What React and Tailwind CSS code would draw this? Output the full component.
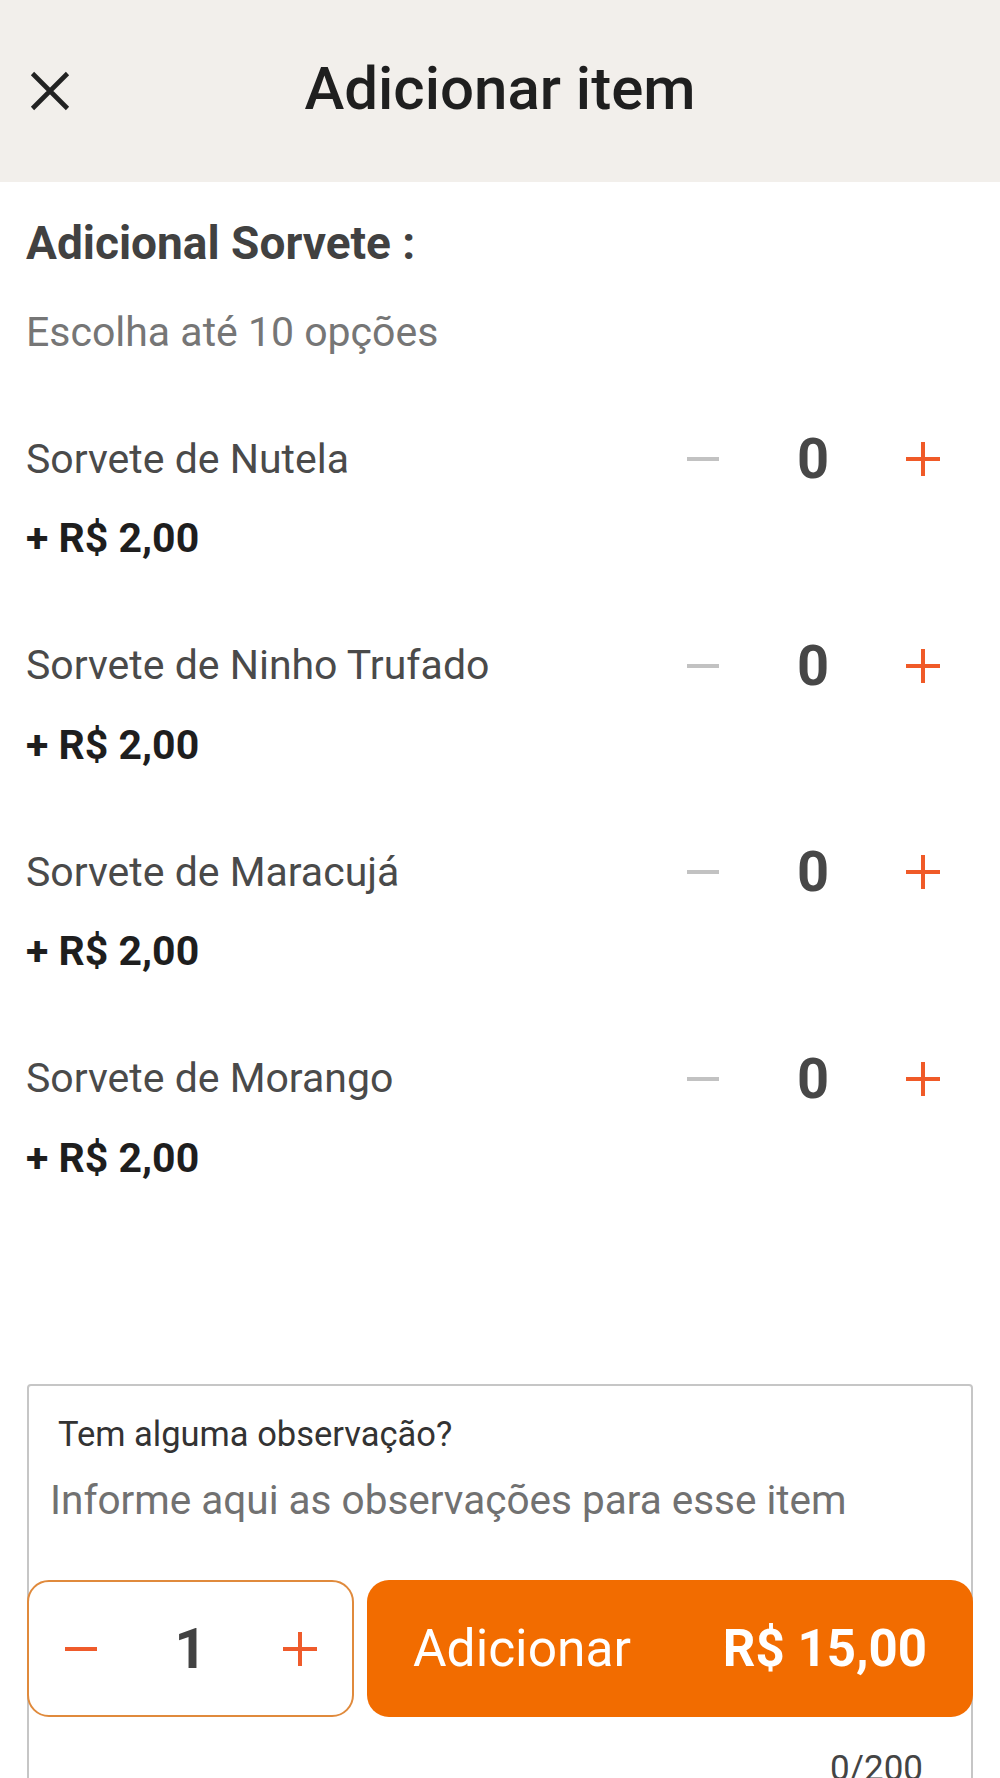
import React from 'react'

const items = [
  { name: 'Sorvete de Nutela', price: '+ R$ 2,00' },
  { name: 'Sorvete de Ninho Trufado', price: '+ R$ 2,00' },
  { name: 'Sorvete de Maracujá', price: '+ R$ 2,00' },
  { name: 'Sorvete de Morango', price: '+ R$ 2,00' },
]

const Minus = ({ color }) => (
  <svg width="34" height="34" viewBox="0 0 34 34">
    <line x1="1" y1="17" x2="33" y2="17" stroke={color} strokeWidth="4" />
  </svg>
)

const Plus = ({ color }) => (
  <svg width="34" height="34" viewBox="0 0 34 34">
    <line x1="0" y1="17" x2="34" y2="17" stroke={color} strokeWidth="4" />
    <line x1="17" y1="0" x2="17" y2="34" stroke={color} strokeWidth="4" />
  </svg>
)

const OptionRow = ({ name, price }) => (
  <div className="pb-[78.5px]">
    <div className="flex items-center h-[56px] pl-[26px] pr-[22px]">
      <span className="flex-1 text-[41px] leading-none text-[#4a4a4a]">{name}</span>
      <div className="flex items-center">
        <div className="w-[110px] flex justify-center"><Minus color="#c2c2c2" /></div>
        <div className="w-[110px] text-center text-[56px] leading-none font-bold text-[#474747]">0</div>
        <div className="w-[110px] flex justify-center"><Plus color="#f05a28" /></div>
      </div>
    </div>
    <div className="mt-[31px] pl-[26px] text-[41px] leading-none font-bold text-[#1e1e1e]">{price}</div>
  </div>
)

export default function App() {
  return (
    <div className="w-[1000px] h-[1778px] overflow-hidden bg-white font-['Roboto',sans-serif]">
      <header className="h-[182px] bg-[#f2efeb] grid grid-cols-[100px_1fr_100px] items-center">
        <div className="pl-[30px]">
          <svg width="40" height="40" viewBox="0 0 40 40">
            <path d="M2.5 2.5 L37.5 37.5 M37.5 2.5 L2.5 37.5" stroke="#222" strokeWidth="4.6" />
          </svg>
        </div>
        <h1 className="text-center text-[60px] leading-none font-medium text-[#1f1f1f] -mt-[4px]">Adicionar item</h1>
        <div />
      </header>

      <section className="pt-[38px]">
        <h2 className="pl-[26px] text-[46px] leading-none font-bold text-[#414141]">Adicional Sorvete :</h2>
        <p className="mt-[46px] pl-[26px] text-[41px] leading-none text-[#767676]">Escolha até 10 opções</p>
        <div className="mt-[78px]">
          {items.map((it) => (
            <OptionRow key={it.name} name={it.name} price={it.price} />
          ))}
        </div>
      </section>

      <div className="mt-[127px] ml-[27px] w-[946px] border-2 border-[#c6c6c6] rounded-[4px] h-[500px]">
        <p className="pt-[31px] pl-[29px] text-[34.5px] leading-none text-[#333]">Tem alguma observação?</p>
        <p className="mt-[28px] pl-[21px] text-[40.5px] leading-none text-[#717171]">Informe aqui as observações para esse item</p>
        <div className="mt-[60px] -mx-[2px] flex gap-[13px] h-[137px]">
          <div className="w-[327px] border-2 border-[#e08a3c] rounded-[22px] bg-white flex items-center justify-between px-[35px]">
            <Minus color="#ef5b2b" />
            <span className="text-[56px] leading-none font-bold text-[#424242]">1</span>
            <Plus color="#ef5b2b" />
          </div>
          <button className="flex-1 rounded-[22px] bg-[#f26c00] flex items-center justify-between pl-[46px] pr-[46px] text-white">
            <span className="text-[51.5px] leading-none">Adicionar</span>
            <span className="text-[51px] leading-none font-bold">R$ 15,00</span>
          </button>
        </div>
        <p className="mt-[34px] pr-[48px] text-right text-[35px] leading-none text-[#444]">0/200</p>
      </div>
    </div>
  )
}
